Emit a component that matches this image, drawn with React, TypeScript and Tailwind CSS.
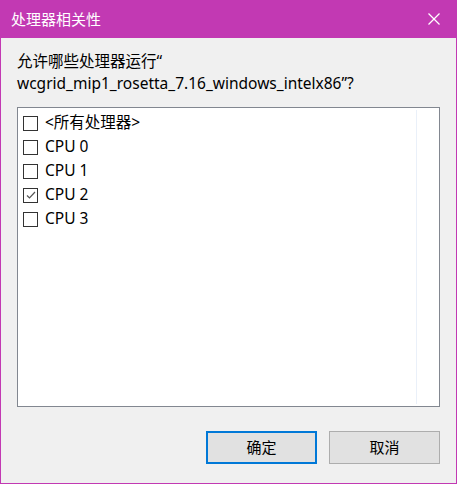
export default function App() {
  const items = [
    { label: "<所有处理器>", checked: false },
    { label: "CPU 0", checked: false },
    { label: "CPU 1", checked: false },
    { label: "CPU 2", checked: true },
    { label: "CPU 3", checked: false },
  ];

  return (
    <div
      className="w-[457px] h-[484px] flex flex-col border border-t-0 border-[#c239b3] bg-[#f0f0f0] text-black"
      style={{ fontFamily: '"Noto Sans", "Noto Sans CJK SC", sans-serif' }}
    >
      {/* title bar */}
      <div className="h-[38px] -mx-px bg-[#c239b3] flex items-center justify-between pl-[11px] pr-[17px] text-white">
        <span className="text-[15px] leading-none">处理器相关性</span>
        <svg width="12" height="12" viewBox="0 0 12 12" stroke="white" strokeWidth="1.2">
          <line x1="0.5" y1="0.5" x2="11.5" y2="11.5" />
          <line x1="11.5" y1="0.5" x2="0.5" y2="11.5" />
        </svg>
      </div>

      <div className="flex-1 flex flex-col px-4 pt-[12px]">
        <p className="text-[15.5px] leading-[22px]">
          允许哪些处理器运行“
          <br />
          wcgrid_mip1_rosetta_7.16_windows_intelx86”?
        </p>

        <div className="mt-[13px] h-[300px] border border-[#828790] bg-white flex">
          <div className="flex-1 flex flex-col pl-[5px] pt-[3px]">
            {items.map((it) => (
              <div key={it.label} className="h-[24px] flex items-center gap-[7px]">
                <span className="w-[15px] h-[15px] border border-[#333] bg-white flex items-center justify-center">
                  {it.checked && (
                    <svg width="12" height="12" viewBox="0 0 12 12" fill="none" stroke="#555" strokeWidth="1.2">
                      <path d="M2 6.5 L4.5 9 L10 3" />
                    </svg>
                  )}
                </span>
                <span className="text-[15.5px] leading-none">{it.label}</span>
              </div>
            ))}
          </div>
          <div className="w-px my-[2px] bg-[#eaf0f9] mr-[22px]" />
        </div>

        <div className="mt-[24px] flex justify-end gap-[12px]">
          <button className="w-[111px] h-[33px] border-2 border-[#0078d7] bg-[#e1e1e1] text-[15px]">
            确定
          </button>
          <button className="w-[111px] h-[33px] border border-[#adadad] bg-[#e1e1e1] text-[15px]">
            取消
          </button>
        </div>
      </div>
    </div>
  );
}
